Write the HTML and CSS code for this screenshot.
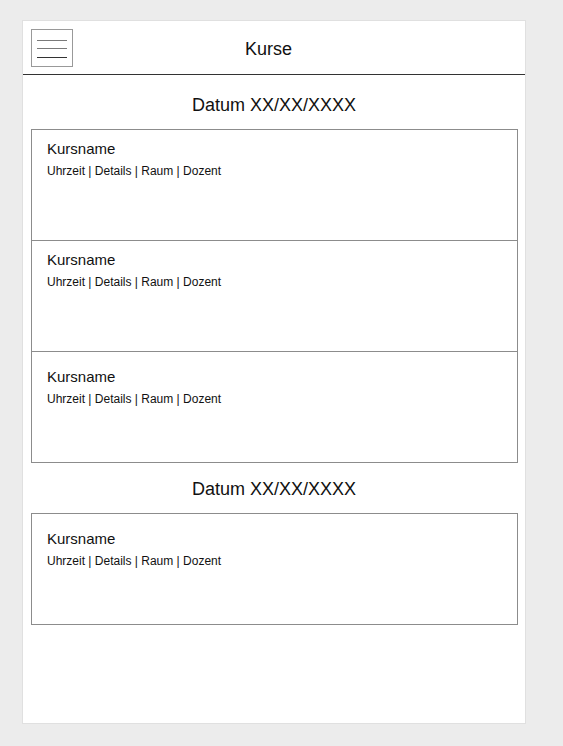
FILE: index.html
```html
<!DOCTYPE html>
<html lang="de">
<head>
<meta charset="utf-8">
<title>Kurse</title>
<link rel="stylesheet" href="styles.css">
</head>
<body>
<div class="panel">
  <header class="topbar">
    <button class="menu" type="button" aria-label="Menü">
      <svg width="40" height="36" viewBox="0 0 40 36">
        <line x1="5" y1="10.5" x2="35" y2="10.5" stroke="#7a7a7a" stroke-width="1"/>
        <line x1="5" y1="18.5" x2="35" y2="18.5" stroke="#7a7a7a" stroke-width="1"/>
        <line x1="5" y1="27.5" x2="35" y2="27.5" stroke="#333" stroke-width="1"/>
      </svg>
    </button>
    <h1 class="title">Kurse</h1>
  </header>
  <main class="content">
    <h2 class="date">Datum XX/XX/XXXX</h2>
    <div class="card">
      <div class="item">
        <div class="name">Kursname</div>
        <div class="meta">Uhrzeit | Details | Raum | Dozent</div>
      </div>
      <div class="item">
        <div class="name">Kursname</div>
        <div class="meta">Uhrzeit | Details | Raum | Dozent</div>
      </div>
      <div class="item item-low">
        <div class="name">Kursname</div>
        <div class="meta">Uhrzeit | Details | Raum | Dozent</div>
      </div>
    </div>
    <h2 class="date">Datum XX/XX/XXXX</h2>
    <div class="card">
      <div class="item item-low">
        <div class="name">Kursname</div>
        <div class="meta">Uhrzeit | Details | Raum | Dozent</div>
      </div>
    </div>
  </main>
</div>
</body>
</html>
```
FILE: styles.css
```css
* { box-sizing: border-box; }

html, body {
  margin: 0;
  padding: 0;
}

body {
  background: #ececec;
  font-family: "Liberation Sans", Arial, sans-serif;
  color: #111;
}

.panel {
  margin: 20px 0 0 22px;
  width: 504px;
  height: 704px;
  background: #fff;
  border: 1px solid #e0e0e0;
}

.topbar {
  display: flex;
  align-items: flex-start;
  height: 54px;
  padding: 8px 0 0 8px;
  border-bottom: 1px solid #333;
}

.menu {
  width: 42px;
  height: 38px;
  padding: 0;
  margin: 0;
  background: #fff;
  border: 1px solid #999;
  display: block;
}

.menu svg { display: block; }

.title {
  flex: 1;
  margin: 10px 0 0 0;
  padding-right: 61px;
  font-size: 18px;
  line-height: 20px;
  font-weight: normal;
  text-align: center;
}

.content {
  padding-top: 4px;
}

.date {
  margin: 0;
  padding: 16px 0 14px;
  font-size: 18px;
  line-height: 20px;
  font-weight: normal;
  text-align: center;
}

.card {
  margin: 0 7px 0 8px;
  border: 1px solid #8c8c8c;
}

.item {
  height: 110px;
  padding: 10px 15px 0;
}

.item + .item {
  height: 111px;
  border-top: 1px solid #8c8c8c;
}

.item-low {
  padding-top: 16px;
}

.name {
  font-size: 15px;
  line-height: 17px;
}

.meta {
  margin-top: 7px;
  font-size: 12px;
  line-height: 14px;
}
```
